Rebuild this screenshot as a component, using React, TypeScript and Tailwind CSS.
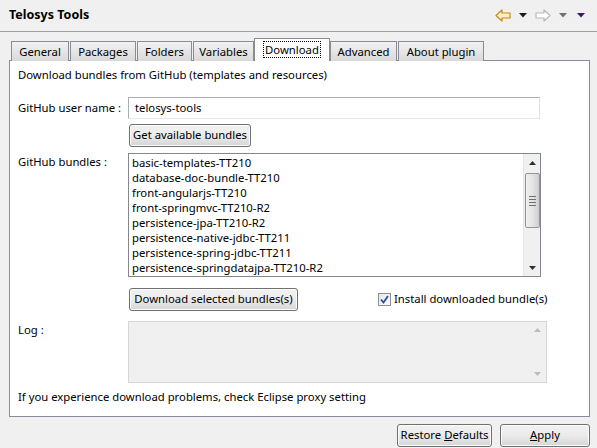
import React from "react";

const font = { fontFamily: '"Noto Sans", "Liberation Sans", sans-serif' };

function Tab({ label, w, selected }: { label: string; w: number; selected?: boolean }) {
  if (selected) {
    return (
      <div
        className="relative z-10 -mx-[1px] h-[23px] -mb-[1px] border border-b-0 border-[#898c95] bg-white flex items-start justify-center pt-[2px] whitespace-nowrap"
        style={{ width: w + 2 }}
      >
        <span className="border border-dotted border-black px-[1px] leading-[15px]">{label}</span>
      </div>
    );
  }
  return (
    <div
      className="h-[20px] mt-[3px] border border-b-0 border-[#898c95] bg-gradient-to-b from-[#f2f2f2] to-[#d9d9d9] flex items-center justify-center leading-none whitespace-nowrap"
      style={{ width: w }}
    >
      {label}
    </div>
  );
}

function Btn({ children, className = "" }: { children: React.ReactNode; className?: string }) {
  return (
    <div
      className={
        "h-[23px] border border-[#707070] rounded-[3px] bg-gradient-to-b from-[#f2f2f2] via-[#ebebeb] to-[#d5d5d5] flex items-center justify-center whitespace-nowrap shadow-[inset_0_0_0_1px_#fcfcfc] " +
        className
      }
    >
      {children}
    </div>
  );
}

function Arrow({ stroke, fill }: { stroke: string; fill: string }) {
  return (
    <svg width="16" height="13" viewBox="0 0 16 13">
      <path d="M1 6.5 L7 1 L7 4 L15 4 L15 9 L7 9 L7 12 Z" fill={fill} stroke={stroke} strokeWidth="1.2" strokeLinejoin="round" />
    </svg>
  );
}

function Caret({ color }: { color: string }) {
  return (
    <svg width="8" height="5" viewBox="0 0 8 5">
      <path d="M0 0 L8 0 L4 4.5 Z" fill={color} />
    </svg>
  );
}

export default function App() {
  const bundles = [
    "basic-templates-TT210",
    "database-doc-bundle-TT210",
    "front-angularjs-TT210",
    "front-springmvc-TT210-R2",
    "persistence-jpa-TT210-R2",
    "persistence-native-jdbc-TT211",
    "persistence-spring-jdbc-TT211",
    "persistence-springdatajpa-TT210-R2",
  ];
  return (
    <div className="w-[597px] h-[448px] bg-[#f0f0f0] text-[11.3px] text-black overflow-hidden" style={font}>
      {/* header */}
      <div className="h-[32px] border-b border-[#a0a0a0] flex items-center pl-[9px] pr-[12px]">
        <div className="font-bold text-[12.5px] flex-1">Telosys Tools</div>
        <div className="flex items-center">
          <Arrow stroke="#c88a10" fill="#fdf0c8" />
          <div className="ml-[8px]"><Caret color="#1a1a1a" /></div>
          <div className="ml-[8px] -scale-x-100 flex"><Arrow stroke="#b8b8b8" fill="#ffffff" /></div>
          <div className="ml-[8px]"><Caret color="#707070" /></div>
          <div className="ml-[10px]"><Caret color="#3a1a6a" /></div>
        </div>
      </div>

      {/* tabs */}
      <div className="mt-[6px] ml-[11px] flex items-start h-[22px] gap-[1px]">
        <Tab label="General" w={58} />
        <Tab label="Packages" w={66} />
        <Tab label="Folders" w={55} />
        <Tab label="Variables" w={61} />
        <Tab label="Download" w={74} selected />
        <Tab label="Advanced" w={67} />
        <Tab label="About plugin" w={86} />
      </div>

      {/* panel */}
      <div className="ml-[9px] w-[581px] h-[357px] border border-[#898c95] bg-white pl-[8px] pt-[6px]">
        <div className="h-[16px] leading-[16px]">Download bundles from GitHub (templates and resources)</div>

        <div className="mt-[14px] flex items-center h-[22px]">
          <div className="w-[110px]">GitHub user name :</div>
          <div className="w-[412px] h-[22px] border border-[#abadb3] border-r-[#dbdfe6] border-b-[#e3e9ef] flex items-center pl-[6px]">
            telosys-tools
          </div>
        </div>

        <div className="mt-[5px] pl-[111px] flex">
          <Btn className="w-[122px]">Get available bundles</Btn>
        </div>

        <div className="mt-[6px] flex items-start">
          <div className="w-[110px] pt-[1px]">GitHub bundles :</div>
          <div className="w-[413px] h-[124px] border border-[#828790] flex">
            <div className="flex-1 pl-[3px] pt-[1px]">
              {bundles.map((b) => (
                <div key={b} className="h-[15px] leading-[15px]">{b}</div>
              ))}
            </div>
            <div className="w-[17px] h-full bg-[#f0f0f0] border-l border-[#e6e6e6] flex flex-col items-center">
              <div className="h-[17px] flex items-center justify-center">
                <svg width="7" height="4" viewBox="0 0 7 4"><path d="M0 4 L7 4 L3.5 0 Z" fill="#303030" /></svg>
              </div>
              <div className="mt-[2px] w-[15px] h-[55px] rounded-[2px] border border-[#959595] bg-gradient-to-r from-[#f0f0f0] via-[#e4e4e4] to-[#cfcfcf] flex flex-col items-center justify-center gap-[2px]">
                <div className="w-[7px] h-[1px] bg-[#707070]" />
                <div className="w-[7px] h-[1px] bg-[#707070]" />
                <div className="w-[7px] h-[1px] bg-[#707070]" />
                <div className="w-[7px] h-[1px] bg-[#707070]" />
              </div>
              <div className="flex-1" />
              <div className="h-[17px] flex items-center justify-center">
                <svg width="7" height="4" viewBox="0 0 7 4"><path d="M0 0 L7 0 L3.5 4 Z" fill="#303030" /></svg>
              </div>
            </div>
          </div>
        </div>

        <div className="mt-[11px] flex items-center">
          <div className="pl-[111px]">
            <Btn className="w-[169px]">Download selected bundles(s)</Btn>
          </div>
          <div className="ml-[80px] flex items-center">
            <div className="w-[13px] h-[13px] border border-[#8e8f8f] bg-gradient-to-br from-[#e6e6e6] to-[#ffffff] flex items-center justify-center">
              <svg width="9" height="9" viewBox="0 0 9 9">
                <path d="M1 4.5 L3.5 7.5 L8 1" fill="none" stroke="#2a4ea0" strokeWidth="1.8" />
              </svg>
            </div>
            <span className="ml-[3px]">Install downloaded bundle(s)</span>
          </div>
        </div>

        <div className="mt-[10px] flex items-start">
          <div className="w-[110px] pt-[1px]">Log :</div>
          <div className="w-[419px] h-[62px] border border-[#d6d6d6] bg-[#f0f0f0] flex justify-end">
            <div className="w-[17px] h-full flex flex-col items-center justify-between py-[6px]">
              <svg width="7" height="4" viewBox="0 0 7 4"><path d="M0 4 L7 4 L3.5 0 Z" fill="#bdbdbd" /></svg>
              <svg width="7" height="4" viewBox="0 0 7 4"><path d="M0 0 L7 0 L3.5 4 Z" fill="#bdbdbd" /></svg>
            </div>
          </div>
        </div>

        <div className="mt-[6px] h-[16px] leading-[16px]">If you experience download problems, check Eclipse proxy setting</div>
      </div>

      {/* bottom buttons */}
      <div className="mt-[7px] flex justify-end pr-[7px] gap-[8px]">
        <Btn className="w-[95px]">
          Restore <span className="underline ml-[3px]">D</span>efaults
        </Btn>
        <Btn className="w-[90px]">
          <span className="underline">A</span>pply
        </Btn>
      </div>
    </div>
  );
}
